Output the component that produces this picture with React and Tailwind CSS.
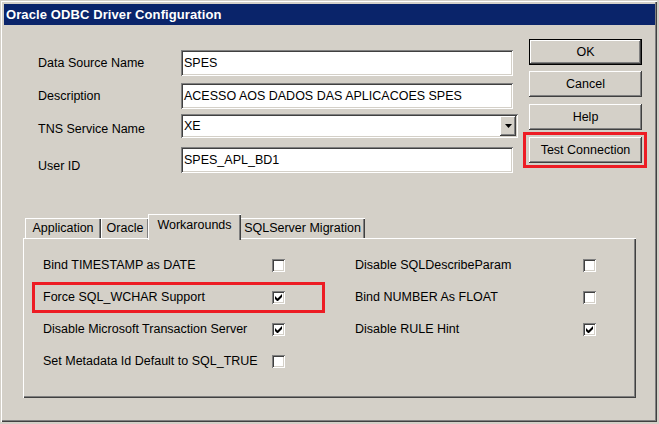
import React from "react";

const raised =
  "shadow-[inset_-1px_-1px_#404040,inset_1px_1px_#ffffff,inset_-2px_-2px_#808080,inset_2px_2px_#d4d0c8]";
const sunken =
  "shadow-[inset_1px_1px_#808080,inset_-1px_-1px_#ffffff,inset_2px_2px_#404040,inset_-2px_-2px_#d4d0c8]";

function Field({ label, value, labelTop, combo }) {
  return (
    <div className="flex items-start">
      <div className="w-[143px] leading-[14px]" style={{ marginTop: labelTop }}>
        {label}
      </div>
      {combo ? (
        <div className={`w-[337px] h-[24px] bg-white flex items-center pl-[3px] pr-[2px] ${sunken}`}>
          <span className="flex-1">{value}</span>
          <span className={`w-[16px] h-[20px] bg-[#d4d0c8] flex items-center justify-center ${raised}`}>
            <svg width="7" height="4" viewBox="0 0 7 4">
              <path d="M0 0h7L3.5 4z" fill="#000" />
            </svg>
          </span>
        </div>
      ) : (
        <div className={`w-[332px] h-[26px] bg-white flex items-center pl-[3px] ${sunken}`}>{value}</div>
      )}
    </div>
  );
}

function Btn({ children, isDefault }) {
  return (
    <div
      className={`relative w-[113px] h-[26px] flex items-center justify-center ${
        isDefault ? "border border-black" : ""
      }`}
    >
      <div className={`absolute inset-0 ${raised}`} />
      <span className="relative">{children}</span>
    </div>
  );
}

function Check({ on }) {
  return (
    <div className={`w-[13px] h-[13px] bg-white flex items-center justify-center shrink-0 ${sunken}`}>
      {on && (
        <svg width="7" height="7" viewBox="0 0 7 7">
          <path d="M0 2v3l2 2h1l4-4V0L2.5 4.5z" fill="#000" />
        </svg>
      )}
    </div>
  );
}

function Opt({ label, on, labelW, highlight }) {
  return (
    <div className="relative h-[32px] flex items-center">
      {highlight && (
        <div className="absolute left-[-11px] top-[1px] w-[293px] h-[31px] border-[3px] border-[#ed1c24]" />
      )}
      <span className="shrink-0 whitespace-nowrap" style={{ width: labelW }}>
        {label}
      </span>
      <Check on={on} />
    </div>
  );
}

export default function App() {
  const tabs = [
    { name: "Application", w: "w-[76px]" },
    { name: "Oracle", w: "w-[48px]" },
    { name: "Workarounds", w: "w-[93px]", active: true },
    { name: "SQLServer Migration", w: "w-[125px]" },
  ];

  return (
    <div className="w-[659px] h-[424px] bg-[#d4d0c8] text-[12.5px] text-black font-['Liberation_Sans',Arial,sans-serif]">
      <div className="w-[657px] h-[422px] p-[4px] flex flex-col shadow-[inset_1px_1px_#d4d0c8,inset_2px_2px_#ffffff,inset_-1px_-1px_#404040,inset_-2px_-2px_#808080]">
        <div className="h-[21px] bg-[#0a246a] text-white font-bold text-[13px] tracking-[0.1px] flex items-center pl-[2px] mr-[-2px]">
          Oracle ODBC Driver Configuration
        </div>

        <div className="flex">
          <div className="ml-[34px] mt-[25px] w-[491px] flex flex-col">
            <Field label="Data Source Name" value="SPES" labelTop="6px" />
            <div className="h-[7px]" />
            <Field label="Description" value="ACESSO AOS DADOS DAS APLICACOES SPES" labelTop="6px" />
            <div className="h-[5px]" />
            <Field label="TNS Service Name" value="XE" labelTop="8px" combo />
            <div className="h-[9px]" />
            <Field label="User ID" value="SPES_APL_BD1" labelTop="12px" />
          </div>

          <div className="mt-[14px] flex flex-col gap-[6px]">
            <Btn isDefault>OK</Btn>
            <Btn>Cancel</Btn>
            <div className="mt-[1px]">
              <Btn>Help</Btn>
            </div>
            <div className="relative mt-[1px]">
              <div className="absolute left-[-6px] right-[-5px] top-[-5px] bottom-[-5px] border-[3px] border-[#ed1c24]" />
              <Btn>Test Connection</Btn>
            </div>
          </div>
        </div>

        <div className="ml-[19px] mt-[41px] w-[613px] flex flex-col">
          <div className="flex items-end pl-[2px] h-[24px]">
            {tabs.map((t) =>
              t.active ? (
                <div
                  key={t.name}
                  className={`relative z-10 ${t.w} h-[26px] mb-[-2px] mx-[-1px] bg-[#d4d0c8] flex items-start justify-center pt-[2px] shadow-[inset_1px_1px_#ffffff,inset_-1px_0_#404040,inset_-2px_0_#808080]`}
                >
                  {t.name}
                </div>
              ) : (
                <div
                  key={t.name}
                  className={`${t.w} h-[20px] flex items-center justify-center whitespace-nowrap shadow-[inset_1px_1px_#ffffff,inset_-1px_0_#404040,inset_-2px_0_#808080]`}
                >
                  {t.name}
                </div>
              )
            )}
          </div>
          <div className="h-[160px] pt-[11px] shadow-[inset_1px_1px_#ffffff,inset_-1px_-1px_#404040,inset_-2px_-2px_#808080] grid grid-cols-[312px_1fr] pl-[20px]">
            <div className="flex flex-col">
              <Opt label="Bind TIMESTAMP as DATE" labelW="229px" />
              <Opt label="Force SQL_WCHAR Support" labelW="229px" on highlight />
              <Opt label="Disable Microsoft Transaction Server" labelW="229px" on />
              <Opt label="Set Metadata Id Default to SQL_TRUE" labelW="229px" />
            </div>
            <div className="flex flex-col">
              <Opt label="Disable SQLDescribeParam" labelW="228px" />
              <Opt label="Bind NUMBER As FLOAT" labelW="228px" />
              <Opt label="Disable RULE Hint" labelW="228px" on />
            </div>
          </div>
        </div>
      </div>
    </div>
  );
}
